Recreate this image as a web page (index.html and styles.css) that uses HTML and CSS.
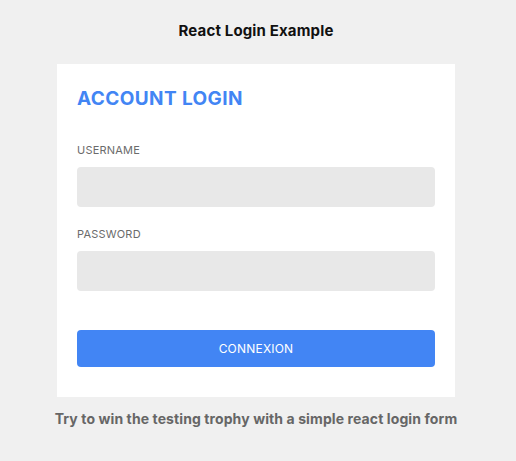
FILE: index.html
```html
<!DOCTYPE html>
<html>
<head>
<meta charset="utf-8">
<link rel="stylesheet" href="styles.css">
</head>
<body>
<div class="page">
  <h1 class="app-title">React Login Example</h1>
  <form class="card">
    <h2 class="card-title">ACCOUNT LOGIN</h2>
    <label class="field">
      <span class="field-label">USERNAME</span>
      <input class="field-input" type="text">
    </label>
    <label class="field">
      <span class="field-label">PASSWORD</span>
      <input class="field-input" type="password">
    </label>
    <button class="submit" type="button">CONNEXION</button>
  </form>
  <p class="footer">Try to win the testing trophy with a simple react login form</p>
</div>
</body>
</html>
```
FILE: styles.css
```css
* { box-sizing: border-box; }
html, body { margin: 0; padding: 0; }
body {
  background: #f0f0f0;
  font-family: Inter, "Noto Sans", sans-serif;
  width: 516px;
  height: 461px;
  overflow: hidden;
}
.page {
  width: 512px;
  display: flex;
  flex-direction: column;
  align-items: center;
  padding-top: 22px;
}
.app-title {
  margin: 0;
  font-size: 15px;
  line-height: 18px;
  font-weight: 700;
  letter-spacing: 0.15px;
  color: #111;
}
.card {
  margin-top: 24px;
  width: 398px;
  background: #fff;
  padding: 23px 20px 30px;
  display: flex;
  flex-direction: column;
}
.card-title {
  margin: 0;
  font-size: 19px;
  line-height: 24px;
  font-weight: 700;
  letter-spacing: 0.4px;
  color: #4285f4;
}
.field {
  display: flex;
  flex-direction: column;
  margin-top: 32px;
}
.field + .field { margin-top: 20px; }
.field-label {
  font-size: 11px;
  line-height: 14px;
  color: #6b6b6b;
  letter-spacing: 0.2px;
  margin-bottom: 10px;
}
.field-input {
  height: 40px;
  border: none;
  border-radius: 4px;
  background: #e8e8e8;
  outline: none;
}
.submit {
  margin-top: 39px;
  height: 37px;
  border: none;
  border-radius: 4px;
  background: #4285f4;
  color: #fff;
  font-family: inherit;
  font-size: 12px;
  letter-spacing: 0.2px;
}
.footer {
  margin: 13px 0 0;
  font-size: 14px;
  line-height: 17px;
  font-weight: 700;
  letter-spacing: 0.1px;
  color: #666;
}
```
